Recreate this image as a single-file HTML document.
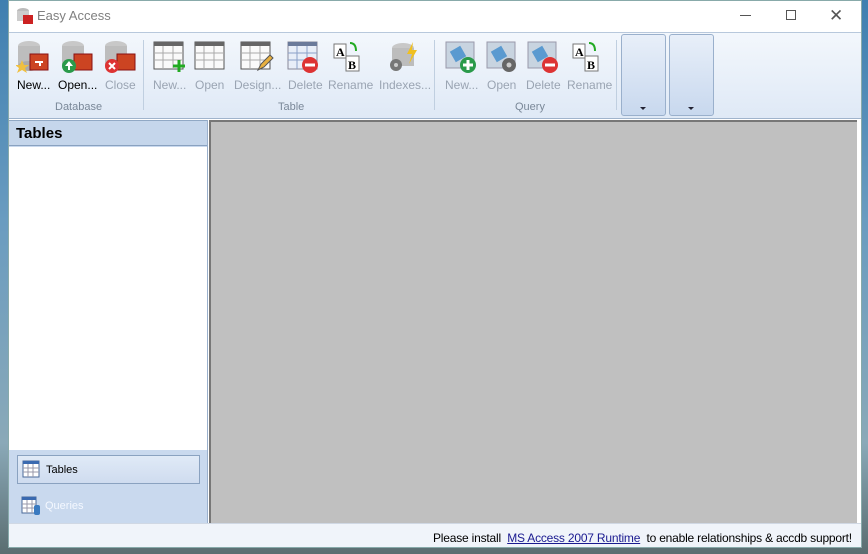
<!DOCTYPE html>
<html><head><meta charset="utf-8"><style>
*{margin:0;padding:0;box-sizing:border-box}
body{width:868px;height:554px;overflow:hidden;position:relative;font-family:"Liberation Sans",sans-serif;font-size:12px;background:linear-gradient(180deg,#3f7fb0 0%,#6a9cc0 40%,#8aa9b8 80%,#5a6d70 100%)}
.a{position:absolute}
.win{left:8px;top:0;width:854px;height:548px;background:#fff;border:1px solid #8aa}
.lbl{position:absolute;top:78px;font-size:12px;color:#9aa4b2;text-align:center;white-space:nowrap}
.lbl.on{color:#000}
.grp{position:absolute;top:101px;font-size:11px;color:#7a8898}
.sep{position:absolute;top:40px;width:1px;height:70px;background:#c0cfe0}
.ic{position:absolute;top:40px;width:34px;height:34px}
</style></head><body>
<div class="a win"></div>
<!-- title -->
<div class="a" style="left:9px;top:1px;width:852px;height:31px;background:#fff"></div>
<svg class="a" style="left:16px;top:7px" width="18" height="18"><ellipse cx="7" cy="4" rx="6" ry="3" fill="#bbb"/><rect x="1" y="4" width="12" height="10" fill="#ccc"/><rect x="7" y="8" width="10" height="9" fill="#c22"/></svg>
<div class="a" style="left:37px;top:8px;font-size:13px;color:#808080">Easy Access</div>
<div class="a" style="left:740px;top:15px;width:11px;height:1px;background:#555"></div>
<div class="a" style="left:786px;top:10px;width:10px;height:10px;border:1px solid #555"></div>
<div class="a" style="left:829px;top:6px;font-size:17px;color:#555">✕</div>
<!-- ribbon -->
<div class="a" style="left:9px;top:32px;width:852px;height:87px;background:linear-gradient(180deg,#f3f7fc,#dfe9f6);border-top:1px solid #b8c8dc;border-bottom:1px solid #a0b4cc"></div>
<!-- database icons -->
<svg class="ic" style="left:16px"><ellipse cx="13" cy="6" rx="11" ry="5" fill="#c8c8c8"/><rect x="2" y="6" width="22" height="20" fill="#bdbdbd"/><ellipse cx="13" cy="26" rx="11" ry="5" fill="#aaa"/><rect x="14" y="14" width="18" height="16" fill="#c42" stroke="#811"/><path d="M19 22h8M24 22v4" stroke="#fff" stroke-width="2"/><path d="M6 20l2 5h5l-4 3 2 5-5-3-5 3 2-5-4-3h5z" fill="#f0c040"/></svg>
<svg class="ic" style="left:60px"><ellipse cx="13" cy="6" rx="11" ry="5" fill="#c8c8c8"/><rect x="2" y="6" width="22" height="20" fill="#bdbdbd"/><rect x="14" y="14" width="18" height="16" fill="#c42" stroke="#811"/><circle cx="9" cy="26" r="7" fill="#2a9a4a"/><path d="M9 21l-4 5h3v4h2v-4h3z" fill="#fff"/></svg>
<svg class="ic" style="left:103px"><ellipse cx="13" cy="6" rx="11" ry="5" fill="#c8c8c8"/><rect x="2" y="6" width="22" height="20" fill="#bdbdbd"/><rect x="14" y="14" width="18" height="16" fill="#c42" stroke="#811"/><circle cx="9" cy="26" r="7" fill="#d33"/><path d="M6 23l6 6M12 23l-6 6" stroke="#fff" stroke-width="2"/></svg>
<!-- table icons -->
<svg class="ic" style="left:153px"><rect x="1" y="2" width="29" height="27" fill="#fafafa" stroke="#555"/><rect x="1" y="2" width="29" height="4" fill="#666"/><path d="M1 13h29M1 20h29M10 6v23M20 6v23" stroke="#aaa"/><path d="M26 20v12M20 26h12" stroke="#2a2" stroke-width="3"/></svg>
<svg class="ic" style="left:194px"><rect x="1" y="2" width="29" height="27" fill="#fafafa" stroke="#555"/><rect x="1" y="2" width="29" height="4" fill="#666"/><path d="M1 13h29M1 20h29M10 6v23M20 6v23" stroke="#aaa"/></svg>
<svg class="ic" style="left:240px"><rect x="1" y="2" width="29" height="27" fill="#fafafa" stroke="#555"/><rect x="1" y="2" width="29" height="4" fill="#666"/><path d="M1 13h29M1 20h29M10 6v23M20 6v23" stroke="#aaa"/><path d="M18 30l3-6 9-9 3 3-9 9z" fill="#e8b040" stroke="#555"/></svg>
<svg class="ic" style="left:287px"><rect x="1" y="2" width="29" height="27" fill="#e8eef8" stroke="#889"/><rect x="1" y="2" width="29" height="4" fill="#6a7a9a"/><path d="M1 13h29M1 20h29M10 6v23M20 6v23" stroke="#8aa0c8"/><circle cx="23" cy="25" r="8" fill="#d33"/><rect x="18" y="23.5" width="10" height="3" fill="#fff"/></svg>
<svg class="ic" style="left:333px"><rect x="1" y="4" width="12" height="14" fill="#fff" stroke="#777"/><text x="3" y="16" font-family="Liberation Serif" font-weight="bold" font-size="12">A</text><rect x="13" y="16" width="13" height="15" fill="#fff" stroke="#777"/><text x="15" y="29" font-family="Liberation Serif" font-weight="bold" font-size="12">B</text><path d="M17 3q6 0 6 8" stroke="#2a2" stroke-width="2" fill="none"/></svg>
<svg class="ic" style="left:387px"><ellipse cx="16" cy="8" rx="11" ry="5" fill="#c8c8c8"/><rect x="5" y="8" width="22" height="18" fill="#bdbdbd"/><circle cx="9" cy="25" r="6" fill="#777"/><circle cx="9" cy="25" r="2" fill="#ccc"/><path d="M26 2l-6 12h5l-3 10 8-14h-5z" fill="#f0c020"/></svg>
<!-- query icons -->
<svg class="ic" style="left:445px"><rect x="1" y="2" width="28" height="26" fill="#c8d4e0" stroke="#99a"/><rect x="7" y="8" width="12" height="12" fill="#5a9ad0" transform="rotate(-30 13 14)"/><circle cx="23" cy="25" r="8" fill="#2a9a4a"/><path d="M23 20v10M18 25h10" stroke="#fff" stroke-width="3"/></svg>
<svg class="ic" style="left:486px"><rect x="1" y="2" width="28" height="26" fill="#c8d4e0" stroke="#99a"/><rect x="7" y="8" width="12" height="12" fill="#5a9ad0" transform="rotate(-30 13 14)"/><circle cx="23" cy="25" r="7" fill="#666"/><circle cx="23" cy="25" r="2.5" fill="#ccc"/></svg>
<svg class="ic" style="left:527px"><rect x="1" y="2" width="28" height="26" fill="#c8d4e0" stroke="#99a"/><rect x="7" y="8" width="12" height="12" fill="#5a9ad0" transform="rotate(-30 13 14)"/><circle cx="23" cy="25" r="8" fill="#d33"/><rect x="18" y="23.5" width="10" height="3" fill="#fff"/></svg>
<svg class="ic" style="left:572px"><rect x="1" y="4" width="12" height="14" fill="#fff" stroke="#777"/><text x="3" y="16" font-family="Liberation Serif" font-weight="bold" font-size="12">A</text><rect x="13" y="16" width="13" height="15" fill="#fff" stroke="#777"/><text x="15" y="29" font-family="Liberation Serif" font-weight="bold" font-size="12">B</text><path d="M17 3q6 0 6 8" stroke="#2a2" stroke-width="2" fill="none"/></svg>
<div class="lbl on" style="left:17px">New...</div>
<div class="lbl on" style="left:58px">Open...</div>
<div class="lbl" style="left:105px">Close</div>
<div class="lbl" style="left:153px">New...</div>
<div class="lbl" style="left:195px">Open</div>
<div class="lbl" style="left:234px">Design...</div>
<div class="lbl" style="left:288px">Delete</div>
<div class="lbl" style="left:328px">Rename</div>
<div class="lbl" style="left:379px">Indexes...</div>
<div class="lbl" style="left:445px">New...</div>
<div class="lbl" style="left:487px">Open</div>
<div class="lbl" style="left:526px">Delete</div>
<div class="lbl" style="left:567px">Rename</div>
<div class="grp" style="left:55px">Database</div>
<div class="grp" style="left:278px">Table</div>
<div class="grp" style="left:515px">Query</div>
<div class="sep" style="left:143px"></div>
<div class="sep" style="left:434px"></div>
<div class="sep" style="left:616px"></div>
<div class="a" style="left:621px;top:34px;width:45px;height:82px;border:1px solid #9ab0cc;border-radius:3px;background:linear-gradient(180deg,#e8eff9,#c8d8ee)"></div>
<div class="a" style="left:669px;top:34px;width:45px;height:82px;border:1px solid #9ab0cc;border-radius:3px;background:linear-gradient(180deg,#e8eff9,#c8d8ee)"></div>
<div class="a" style="left:640px;top:107px;border:3px solid transparent;border-top:3px solid #223"></div>
<div class="a" style="left:688px;top:107px;border:3px solid transparent;border-top:3px solid #223"></div>
<!-- left panel -->
<div class="a" style="left:9px;top:120px;width:199px;height:403px;background:#c9d9ee;border-right:1px solid #9ab0cc"></div>
<div class="a" style="left:9px;top:120px;width:198px;height:26px;background:#c5d6eb;border-top:1px solid #90a8c4;border-bottom:1px solid #8aa2c0;font-weight:bold;font-size:15px;padding:4px 0 0 7px">Tables</div>
<div class="a" style="left:9px;top:147px;width:198px;height:303px;background:#fff"></div>
<div class="a" style="left:17px;top:455px;width:183px;height:29px;border:1px solid #8aa2c0;background:linear-gradient(180deg,#e0eaf7,#cfdcef);font-size:11px;padding:8px 0 0 28px">Tables</div>
<svg class="a" style="left:22px;top:460px" width="18" height="18"><rect x="1" y="1" width="16" height="16" fill="#fff" stroke="#4a6a9a"/><rect x="1" y="1" width="16" height="3" fill="#3a6ab0"/><path d="M1 8h16M1 12h16M6 4v13M11 4v13" stroke="#99a"/></svg>
<svg class="a" style="left:21px;top:496px" width="20" height="20"><rect x="1" y="1" width="14" height="16" fill="#fff" stroke="#4a6a9a"/><rect x="1" y="1" width="14" height="3" fill="#3a6ab0"/><path d="M1 8h14M1 12h14M6 4v13M11 4v13" stroke="#99a"/><rect x="13" y="9" width="6" height="10" rx="2" fill="#3a7ac0"/></svg>
<div class="a" style="left:45px;top:500px;font-size:11px;color:#f4f8ff">Queries</div>
<!-- gray area -->
<div class="a" style="left:209px;top:120px;width:648px;height:403px;background:#c0c0c0;border-top:2px solid #777;border-left:2px solid #777"></div>
<!-- status -->
<div class="a" style="left:9px;top:523px;width:852px;height:24px;background:#f0f4fa;border-top:1px solid #d0d8e4"></div>
<div class="a" style="left:433px;top:531px;font-size:12px;color:#000;white-space:nowrap;letter-spacing:-0.2px">Please install &nbsp;<span style="color:#1a1a90;text-decoration:underline">MS Access 2007 Runtime</span>&nbsp; to enable relationships &amp; accdb support!</div>
</body></html>
